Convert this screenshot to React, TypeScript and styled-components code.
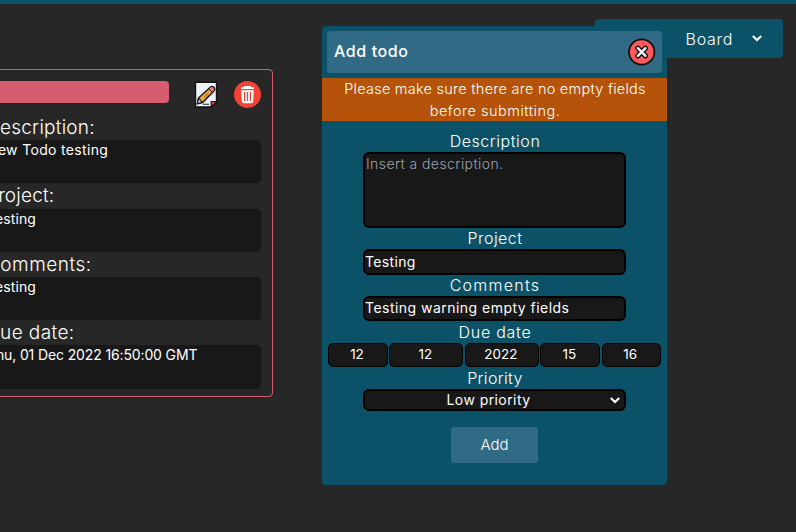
import React from "react";
import styled, { createGlobalStyle } from "styled-components";

const teal = "#0b5268";
const slate = "#316a84";
const ink = "#181818";

const GlobalStyle = createGlobalStyle`
  * { box-sizing: border-box; }
  body { margin: 0; background: #272727; overflow: hidden; }
  button, input, textarea { font: inherit; color: inherit; outline: none; }
`;

const Page = styled.div`
  position: relative;
  width: 796px;
  height: 532px;
  overflow: hidden;
  background: #272727;
  color: #fff;
  font-family: Inter, "Open Sans", sans-serif;
  font-size: 14px;
`;

const TopBar = styled.div`
  height: 4px;
  background: ${teal};
`;

const Content = styled.main`
  display: flex;
  justify-content: space-between;
  align-items: flex-start;
  padding: 15px 13px 0 0;
`;

const Card = styled.article`
  width: 300px;
  height: 328px;
  margin: 50px 0 0 -27px;
  padding: 11px 11px 0;
  border: 1px solid #d65c70;
  border-radius: 4px;
`;

const CardHeader = styled.div`
  display: flex;
  align-items: flex-start;
  height: 33.8px;
`;

const CardTitle = styled.div`
  width: 184px;
  height: 22px;
  margin-right: 24px;
  border-radius: 4px;
  background: #d65c70;
`;

const IconButton = styled.button<{ $gap?: number }>`
  display: flex;
  flex: none;
  padding: 0;
  margin-left: ${(p) => p.$gap ?? 0}px;
  border: 0;
  background: none;
`;

const CardLabel = styled.h3<{ $spacing: number }>`
  margin: 0;
  height: 25.4px;
  padding-left: 1px;
  font-size: 19px;
  font-weight: 300;
  line-height: 25px;
  letter-spacing: ${(p) => p.$spacing}px;
  white-space: nowrap;
`;

const CardValue = styled.p<{ $spacing: number }>`
  margin: 0;
  height: 43px;
  padding-left: 2px;
  border-radius: 4px;
  background: ${ink};
  line-height: 20px;
  letter-spacing: ${(p) => p.$spacing}px;
  white-space: nowrap;
  &:last-child { height: 43.6px; }
`;

const Board = styled.button`
  display: flex;
  align-items: center;
  justify-content: flex-end;
  gap: 19px;
  width: 188px;
  height: 39px;
  padding: 0 21px 0 0;
  border: 0;
  border-radius: 4px;
  background: ${teal};
  font-size: 16px;
  font-weight: 300;
  letter-spacing: 0.7px;
`;

const Modal = styled.form`
  position: absolute;
  left: 322px;
  top: 26px;
  display: flex;
  flex-direction: column;
  align-items: center;
  width: 345px;
  height: 459px;
  padding-top: 5px;
  border-radius: 4px;
  background: ${teal};
`;

const ModalHeader = styled.header`
  display: flex;
  align-items: center;
  justify-content: space-between;
  width: 335px;
  height: 42px;
  padding: 0 6px 0 7px;
  border-radius: 4px;
  background: ${slate};
`;

const ModalTitle = styled.h2`
  margin: 0;
  padding-bottom: 2px;
  font-size: 16px;
  font-weight: 500;
  letter-spacing: 0.6px;
`;

const Warning = styled.p`
  width: 100%;
  height: 43px;
  margin: 5px 0 9px;
  background: #b45309;
  font-size: 14.5px;
  font-weight: 300;
  line-height: 21.5px;
  text-align: center;
`;

const WarningLine = styled.span<{ $spacing: number }>`
  display: block;
  padding-left: 1px;
  letter-spacing: ${(p) => p.$spacing}px;
`;

const Label = styled.label<{ $spacing: number; $height?: number }>`
  height: ${(p) => p.$height ?? 22}px;
  padding-left: 1px;
  font-size: 16px;
  font-weight: 300;
  line-height: ${(p) => (p.$height ?? 23)}px;
  letter-spacing: ${(p) => p.$spacing}px;
`;

const Input = styled.input<{ $spacing: number; $height: number }>`
  width: 263px;
  height: ${(p) => p.$height}px;
  padding: 0 0 2px;
  border: 2px solid #000;
  border-radius: 6px;
  background: ${ink};
  letter-spacing: ${(p) => p.$spacing}px;
`;

const TextArea = styled.textarea`
  display: block;
  width: 263px;
  height: 76px;
  padding: 0 1px;
  border: 2px solid #000;
  border-radius: 6px;
  background: ${ink};
  font-weight: 300;
  line-height: 20px;
  letter-spacing: 0.42px;
  resize: none;
  &::placeholder { color: #9ca3af; opacity: 1; }
`;

const DateRow = styled.div`
  display: grid;
  grid-template-columns: 60px 74px 74px 60px 59px;
  column-gap: 1.45px;
  width: 333px;
  height: 24px;
`;

const DatePart = styled.input`
  min-width: 0;
  width: 100%;
  height: 24px;
  padding: 0 2px 2px 0;
  border: 1px solid #030303;
  border-radius: 5px;
  background: ${ink};
  font-size: 13.5px;
  text-align: center;
`;

const Select = styled.div`
  display: flex;
  align-items: center;
  width: 263px;
  height: 22px;
  padding-right: 4px;
  border: 2px solid #000;
  border-radius: 6px;
  background: ${ink};
`;

const SelectText = styled.span`
  flex: 1;
  padding: 0 0 1px 2px;
  letter-spacing: 0.42px;
  text-align: center;
`;

const AddButton = styled.button`
  width: 87px;
  height: 36px;
  margin-top: 16px;
  padding: 0 0 2px;
  border: 0;
  border-radius: 3px;
  background: ${slate};
  font-size: 15px;
  font-weight: 300;
`;

const Chevron = () => (
  <svg width="10" height="7" viewBox="0 0 10 7" fill="none" stroke="#fff" strokeWidth="2.1">
    <path d="M.8 1 5 5.1 9.2 1" />
  </svg>
);

const EditIcon = () => (
  <svg width="26" height="27" viewBox="0 0 26 27">
    <path d="M2.5 1.2h21v19.6L18.3 26H2.5z" fill="#edf2fb" stroke="#121212" strokeWidth="1.4" strokeLinejoin="round" />
    <path d="M18.2 25.8V20.5h5.3z" fill="#e25563" stroke="#121212" strokeWidth="1.2" />
    <path d="M10 23.3h6" stroke="#444" strokeWidth="1.2" />
    <path d="m4.3 22.8 1.2-5.8L17.3 6.2q1.6-1.6 3.4.2t.2 3.6L9.7 21.5z" fill="#f7a936" stroke="#171717" strokeWidth="1.5" strokeLinejoin="round" />
    <path d="m15.8 7.6 1.7-1.5q1.5-1.3 3.1.3t.2 3.4l-1.5 1.7z" fill="#ff7d85" stroke="#171717" strokeWidth="1" />
    <path d="m4.3 22.8 1.2-5.4 3.9 3.9z" fill="#cfd8dd" stroke="#171717" strokeWidth="1.1" />
    <path d="m11 15.9 4.5-4.3M12.3 17.2l3.8-3.9" stroke="#8c5a20" strokeWidth=".9" />
  </svg>
);

const TrashIcon = () => (
  <svg width="27" height="27" viewBox="0 0 27 27">
    <circle cx="13.5" cy="13.5" r="13.5" fill="#f44336" />
    <path d="M10.3 5h6.4l.6 1.2h2.7v1.9H7v-1.9h2.7z" fill="#fff" />
    <path d="M7.3 9.2h12.4l-.5 11q-.1 2-2.1 2H9.9q-2 0-2.1-2z" fill="#fff" />
    <path d="M10.6 11v9M13.5 11v9M16.4 11v9" stroke="#f44336" strokeWidth="1.2" />
  </svg>
);

const CloseIcon = () => (
  <svg width="28" height="28" viewBox="0 0 28 28">
    <circle cx="13.7" cy="14" r="12.7" fill="#ff595c" stroke="#111" strokeWidth="1.8" />
    <path d="m9.9 10.2 7.6 7.6m0-7.6-7.6 7.6" stroke="#111" strokeWidth="5.2" strokeLinecap="round" />
    <path d="m9.9 10.2 7.6 7.6m0-7.6-7.6 7.6" stroke="#edf4f4" strokeWidth="2.4" strokeLinecap="round" />
  </svg>
);

const todo = [
  { label: "Description:", value: "New Todo testing", ls: 0.25, vs: 0.33 },
  { label: "Project:", value: "Testing", ls: 0.2, vs: 0.1 },
  { label: "Comments:", value: "Testing", ls: 0.5, vs: 0.1 },
  { label: "Due date:", value: "Thu, 01 Dec 2022 16:50:00 GMT", ls: 0.4, vs: -0.13 },
];

export default function App() {
  return (
    <Page>
      <GlobalStyle />
      <TopBar />
      <Content>
        <Card>
          <CardHeader>
            <CardTitle />
            <IconButton type="button" aria-label="Edit"><EditIcon /></IconButton>
            <IconButton type="button" aria-label="Delete" $gap={15}><TrashIcon /></IconButton>
          </CardHeader>
          {todo.map((t) => (
            <React.Fragment key={t.label}>
              <CardLabel $spacing={t.ls}>{t.label}</CardLabel>
              <CardValue $spacing={t.vs}>{t.value}</CardValue>
            </React.Fragment>
          ))}
        </Card>
        <Board type="button">Board <Chevron /></Board>
      </Content>
      <Modal>
        <ModalHeader>
          <ModalTitle>Add todo</ModalTitle>
          <IconButton type="button" aria-label="Close"><CloseIcon /></IconButton>
        </ModalHeader>
        <Warning>
          <WarningLine $spacing={0.25}>Please make sure there are no empty fields</WarningLine>
          <WarningLine $spacing={0.5}>before submitting.</WarningLine>
        </Warning>
        <Label $spacing={0.55}>Description</Label>
        <TextArea placeholder="Insert a description." />
        <Label $spacing={0.45} $height={21}>Project</Label>
        <Input $spacing={0.35} $height={26} defaultValue="Testing" />
        <Label $spacing={1.25} $height={21}>Comments</Label>
        <Input $spacing={0.47} $height={25} defaultValue="Testing warning empty fields" />
        <Label $spacing={0.75}>Due date</Label>
        <DateRow>
          {["12", "12", "2022", "15", "16"].map((v, i) => (
            <DatePart key={i} defaultValue={v} />
          ))}
        </DateRow>
        <Label $spacing={0.35}>Priority</Label>
        <Select><SelectText>Low priority</SelectText><Chevron /></Select>
        <AddButton type="button">Add</AddButton>
      </Modal>
    </Page>
  );
}
